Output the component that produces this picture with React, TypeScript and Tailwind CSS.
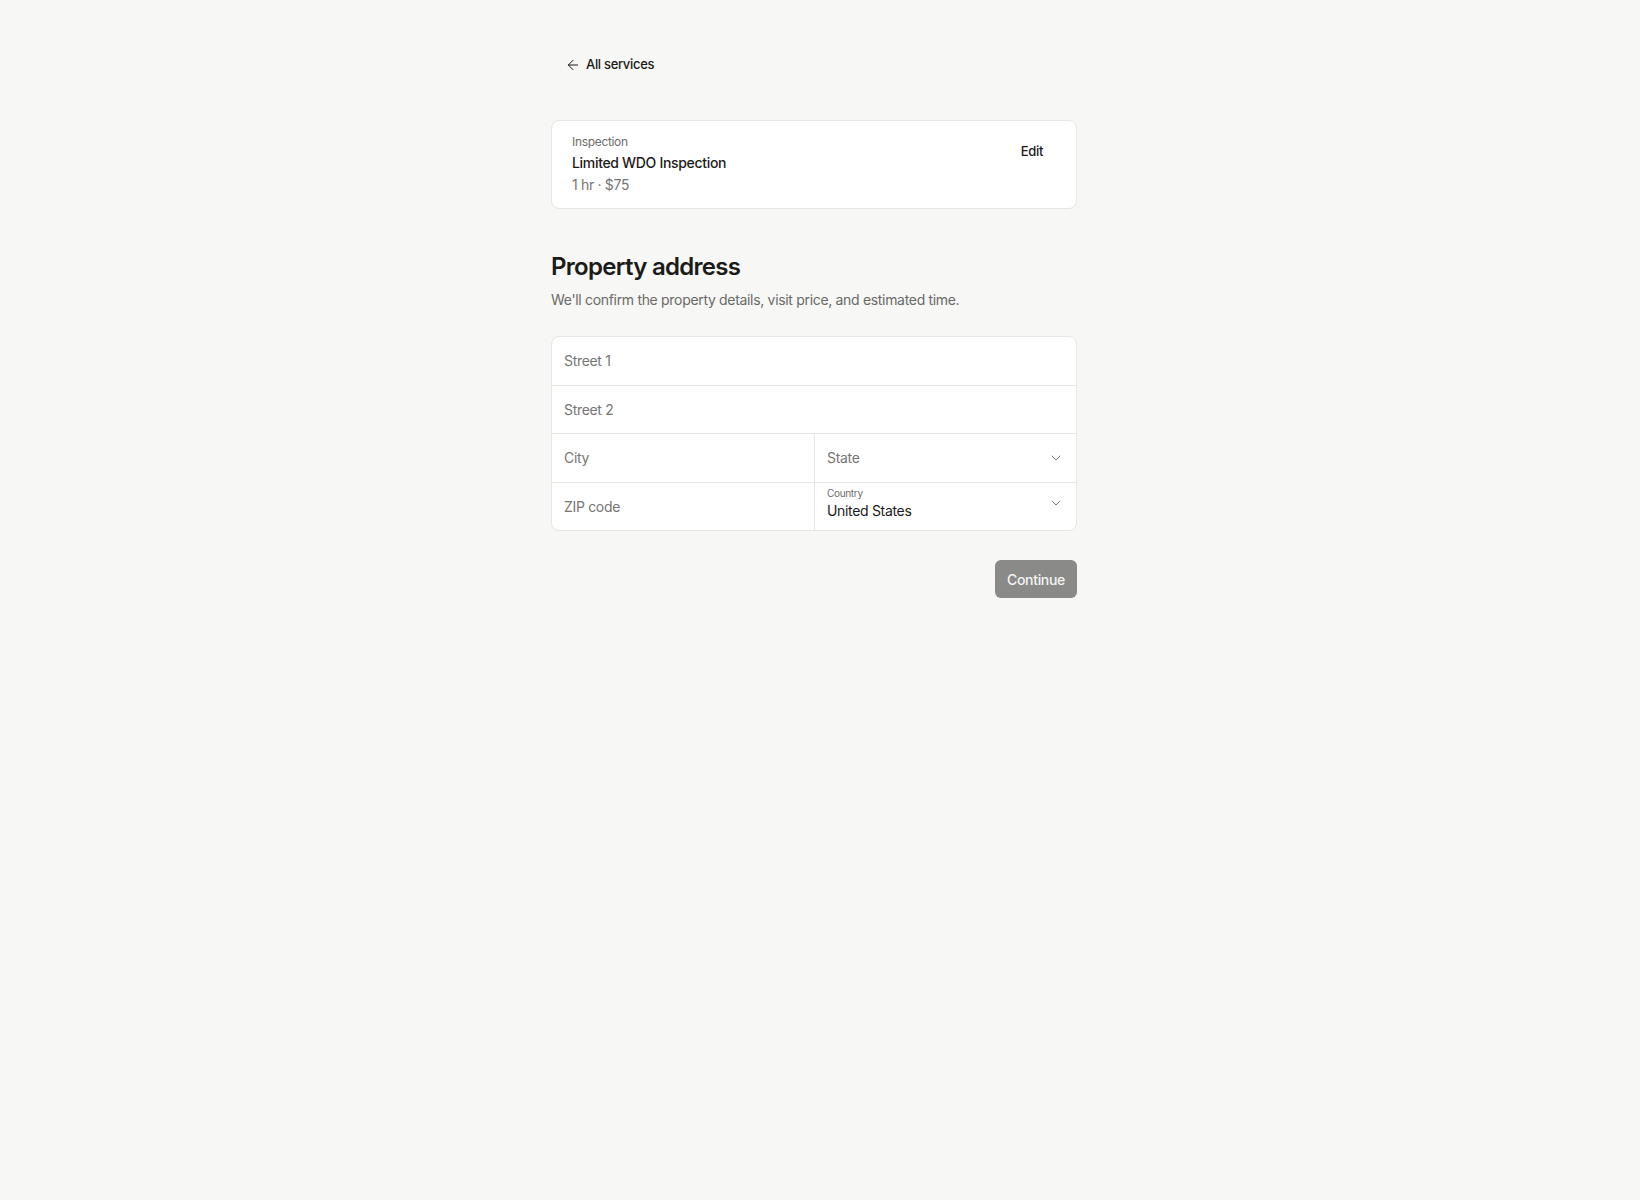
import { ArrowLeft, ChevronDown } from 'lucide-react';

const font = { fontFamily: 'Inter, "Noto Sans", sans-serif' };

function TextField({ placeholder }: { placeholder: string }) {
  return (
    <div className="flex h-[47.5px] items-center px-3 text-[14px] text-[#767674]">
      {placeholder}
    </div>
  );
}

export default function App() {
  return (
    <div className="min-h-screen bg-[#f7f7f5] tracking-[-0.02em] text-[#1b1b1a] antialiased" style={font}>
      <div className="pr-[12px]">
        <div className="mx-auto w-[526px] pt-[55px]">
          {/* back link */}
          <button className="flex h-5 items-center gap-[5px] pl-[14px] text-[13px] font-medium text-[#1b1b1a]">
            <ArrowLeft className="h-4 w-4" strokeWidth={1.5} />
            All services
          </button>

          {/* selected service */}
          <div className="mt-[45px] flex items-start justify-between rounded-[8px] border border-[#e6e6e3] bg-white py-[13px] pl-[20px] pr-[20px]">
            <div className="flex flex-col">
              <span className="text-[12px] leading-[16px] text-[#6e6e6c]">Inspection</span>
              <span className="mt-[3px] text-[14px] font-medium leading-[20px] text-[#1b1b1a]">
                Limited WDO Inspection
              </span>
              <span className="mt-[2px] text-[14px] leading-[20px] text-[#767674]">1 hr · $75</span>
            </div>
            <button className="h-9 rounded-[6px] px-[13px] text-[13px] font-medium text-[#1b1b1a]">
              Edit
            </button>
          </div>

          {/* heading */}
          <h1 className="mt-[42px] text-[24px] font-semibold leading-[32px] tracking-[-0.03em] text-[#1b1b1a]">
            Property address
          </h1>
          <p className="mt-[7px] text-[14px] leading-[20px] text-[#6a6a68]">
            We'll confirm the property details, visit price, and estimated time.
          </p>

          {/* address form */}
          <div className="mt-[26px] overflow-hidden rounded-[8px] border border-[#e6e6e3] bg-white">
            <TextField placeholder="Street 1" />
            <div className="border-t border-[#e6e6e3]">
              <TextField placeholder="Street 2" />
            </div>
            <div className="grid grid-cols-2 border-t border-[#e6e6e3]">
              <TextField placeholder="City" />
              <div className="flex h-[47.5px] items-center justify-between border-l border-[#e6e6e3] px-3">
                <span className="text-[14px] text-[#767674]">State</span>
                <ChevronDown className="h-4 w-4 text-[#7a7a78]" strokeWidth={1.5} />
              </div>
            </div>
            <div className="grid grid-cols-2 border-t border-[#e6e6e3]">
              <TextField placeholder="ZIP code" />
              <div className="flex h-[47.5px] items-center justify-between border-l border-[#e6e6e3] px-3">
                <div className="mb-[4px] flex flex-col">
                  <span className="text-[10px] leading-[12px] text-[#6e6e6c]">Country</span>
                  <span className="mt-[2px] text-[14px] leading-[20px] text-[#1b1b1a]">United States</span>
                </div>
                <ChevronDown className="mb-[6px] h-4 w-4 text-[#7a7a78]" strokeWidth={1.5} />
              </div>
            </div>
          </div>

          <div className="mt-[29px] flex justify-end">
            <button className="h-[38px] w-[82px] rounded-[6px] bg-[#8a8a89] text-[14px] font-medium text-[#f4f4f3]">
              Continue
            </button>
          </div>
        </div>
      </div>
    </div>
  );
}
